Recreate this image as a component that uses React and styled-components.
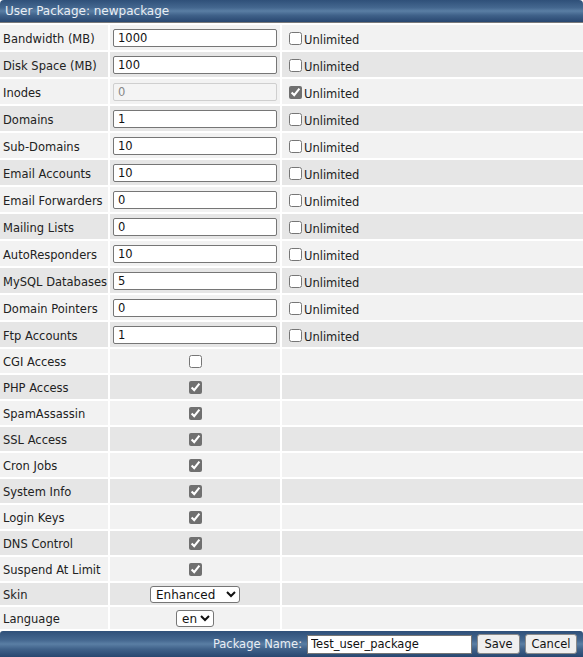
import React, { useState } from 'react';
import styled, { createGlobalStyle } from 'styled-components';

const GlobalStyle = createGlobalStyle`
  html, body { margin: 0; padding: 0; background: #ffffff; }
  body { font-family: "DejaVu Sans", Verdana, sans-serif; font-size: 11.5px; color: #222; }
`;

const Panel = styled.form`
  width: 583px;
  display: grid;
  grid-template-columns: 108px 170px 1fr;
  column-gap: 2px;
  row-gap: 2px;
  background: #ffffff;
`;

const blueBar = `
  background: linear-gradient(to bottom, #2f5079 0%, #44678f 35%, #5a7ea4 50%, #3f6189 70%, #284770 100%);
  color: #e9eef4;
`;

const Header = styled.div`
  grid-column: 1 / -1;
  height: 22px;
  ${blueBar}
  border-radius: 4px 4px 0 0;
  border-bottom: 1px solid #7a7a7a;
  font-size: 12px;
  line-height: 23px;
  padding-left: 5px;
`;

const Cell = styled.div`
  height: ${(p) => p.$h}px;
  background: ${(p) => (p.$odd ? '#e6e6e6' : '#f2f2f2')};
  display: flex;
  align-items: center;
  justify-content: ${(p) => (p.$center ? 'center' : 'flex-start')};
  padding-left: ${(p) => (p.$center ? 0 : 3)}px;
  padding-top: ${(p) => p.$pt || 0}px;
  box-sizing: border-box;
  white-space: nowrap;
`;

const TextInput = styled.input`
  width: 164px;
  height: 18px;
  margin-top: 1px;
  box-sizing: border-box;
  border: 1px solid #767676;
  border-radius: 2px;
  padding: 0 4px;
  font-family: inherit;
  font-size: 11.5px;
  color: #111;
  background: #fff;
  &:disabled {
    background: #f4f4f4;
    border-color: #cfcfcf;
    color: #888;
  }
`;

const Check = styled.input.attrs({ type: 'checkbox' })`
  width: 13px;
  height: 13px;
  margin: ${(p) => (p.$inline ? '1px 2px 0 4px' : '0')};
  accent-color: #707070;
`;

const UnlimitedLabel = styled.label`
  display: flex;
  align-items: center;
  span {
    position: relative;
    top: 2px;
  }
`;

const Select = styled.select`
  font-family: inherit;
  font-size: 12px;
  height: 17px;
  padding: 0 0 0 1px;
  border: 1px solid #767676;
  border-radius: 3px;
  background: #fff;
  color: #111;
  width: ${(p) => p.$w}px;
`;

const Footer = styled.div`
  grid-column: 1 / -1;
  height: 26px;
  ${blueBar}
  border-radius: 3px 3px 0 0;
  display: flex;
  align-items: center;
  justify-content: flex-end;
  gap: 5px;
  padding-right: 6px;
  font-size: 11.5px;
`;

const NameInput = styled.input`
  width: 165px;
  height: 19px;
  box-sizing: border-box;
  border: 1px solid #767676;
  padding: 0 3px;
  font-family: inherit;
  font-size: 11.5px;
  color: #111;
`;

const Button = styled.button`
  height: 20px;
  width: ${(p) => p.$w}px;
  padding: 0;
  font-family: inherit;
  font-size: 11.5px;
  color: #111;
  background: #efefef;
  border: 1px solid #8a8a8a;
  border-radius: 3px;
`;

const limits = [
  ['Bandwidth (MB)', '1000', false],
  ['Disk Space (MB)', '100', false],
  ['Inodes', '0', true],
  ['Domains', '1', false],
  ['Sub-Domains', '10', false],
  ['Email Accounts', '10', false],
  ['Email Forwarders', '0', false],
  ['Mailing Lists', '0', false],
  ['AutoResponders', '10', false],
  ['MySQL Databases', '5', false],
  ['Domain Pointers', '0', false],
  ['Ftp Accounts', '1', false],
];

const features = [
  ['CGI Access', false],
  ['PHP Access', true],
  ['SpamAssassin', true],
  ['SSL Access', true],
  ['Cron Jobs', true],
  ['System Info', true],
  ['Login Keys', true],
  ['DNS Control', true],
  ['Suspend At Limit', true],
];

export default function App() {
  const [name, setName] = useState('Test_user_package');
  let row = 0;

  return (
    <>
      <GlobalStyle />
      <Panel onSubmit={(e) => e.preventDefault()}>
        <Header>User Package: newpackage</Header>

        {limits.map(([label, value, unlimited]) => {
          const odd = row++ % 2 === 1;
          return (
            <React.Fragment key={label}>
              <Cell $h={25} $odd={odd} $pt={3}>{label}</Cell>
              <Cell $h={25} $odd={odd}>
                <TextInput defaultValue={value} disabled={unlimited} />
              </Cell>
              <Cell $h={25} $odd={odd}>
                <UnlimitedLabel>
                  <Check $inline defaultChecked={unlimited} />
                  <span>Unlimited</span>
                </UnlimitedLabel>
              </Cell>
            </React.Fragment>
          );
        })}

        {features.map(([label, on]) => {
          const odd = row++ % 2 === 1;
          return (
            <React.Fragment key={label}>
              <Cell $h={24} $odd={odd} $pt={2}>{label}</Cell>
              <Cell $h={24} $odd={odd} $center>
                <Check defaultChecked={on} />
              </Cell>
              <Cell $h={24} $odd={odd} />
            </React.Fragment>
          );
        })}

        <Cell $h={22} $odd={row % 2 === 1} $pt={2}>Skin</Cell>
        <Cell $h={22} $odd={row % 2 === 1} $center>
          <Select $w={90} defaultValue="enhanced">
            <option value="enhanced">Enhanced</option>
            <option value="default">Default</option>
          </Select>
        </Cell>
        <Cell $h={22} $odd={row++ % 2 === 1} />

        <Cell $h={22} $odd={row % 2 === 1} $pt={2}>Language</Cell>
        <Cell $h={22} $odd={row % 2 === 1} $center>
          <Select $w={38} defaultValue="en">
            <option value="en">en</option>
          </Select>
        </Cell>
        <Cell $h={22} $odd={row++ % 2 === 1} />

        <Footer>
          <span>Package Name:</span>
          <NameInput value={name} onChange={(e) => setName(e.target.value)} />
          <Button $w={43}>Save</Button>
          <Button $w={52}>Cancel</Button>
        </Footer>
      </Panel>
    </>
  );
}
